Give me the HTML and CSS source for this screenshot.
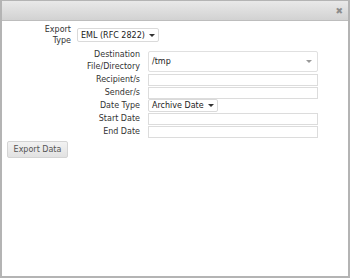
FILE: index.html
```html
<!DOCTYPE html>
<html lang="en">
<head>
    <meta charset="UTF-8">
    <title>Export</title>
    <link rel="stylesheet" href="styles.css">
</head>
<body>
    <div class="dialog">
        <!-- Title bar -->
        <div class="titlebar">
            <span class="close">&#x2716;</span>
        </div>

        <div class="content">
            <!-- Export type -->
            <div class="row type-row">
                <label class="lbl">Export Type</label>
                <div class="select">EML (RFC 2822) <span class="caret"></span></div>
            </div>

            <!-- Details -->
            <div class="fields">
                <label class="lbl">Destination File/Directory</label>
                <div class="combo">/tmp <span class="caret light"></span></div>

                <label class="lbl">Recipient/s</label>
                <div class="input"></div>

                <label class="lbl">Sender/s</label>
                <div class="input"></div>

                <label class="lbl">Date Type</label>
                <div><div class="select short">Archive Date <span class="caret"></span></div></div>

                <label class="lbl">Start Date</label>
                <div class="input"></div>

                <label class="lbl">End Date</label>
                <div class="input"></div>
            </div>

            <button class="btn">Export Data</button>
        </div>
    </div>
</body>
</html>
```

FILE: styles.css
```css
* {
    margin: 0;
    padding: 0;
    box-sizing: border-box;
}

body {
    font-family: 'DejaVu Sans', Verdana, sans-serif;
    font-size: 8px;
    color: #333;
    background: #fff;
    width: 350px;
    height: 278px;
}

.dialog {
    width: 350px;
    height: 278px;
    border: 2px solid #b4b4b4;
    border-top-width: 1px;
    display: flex;
    flex-direction: column;
}

.titlebar {
    height: 20px;
    background: linear-gradient(#e9e9e9, #d2d2d2);
    border-bottom: 1px solid #bdbdbd;
    display: flex;
    justify-content: flex-end;
    align-items: center;
    padding-right: 5px;
}

.close {
    color: #8c8c8c;
    font-size: 9px;
}

.content {
    padding: 3px 5px;
}

.row {
    display: flex;
    align-items: center;
}

.lbl {
    text-align: right;
    line-height: 11px;
}

.type-row {
    margin-left: 34px;
    gap: 6px;
}

.type-row .lbl {
    width: 30px;
}

.select {
    display: inline-flex;
    align-items: center;
    height: 14px;
    padding: 0 3px;
    border: 1px solid #dadada;
    border-radius: 2px;
    color: #222;
    gap: 4px;
}

.select.short {
    height: 13px;
}

.caret {
    width: 0;
    height: 0;
    border-left: 3px solid transparent;
    border-right: 3px solid transparent;
    border-top: 3px solid #333;
}

.caret.light {
    border-top-color: #999;
}

.fields {
    display: grid;
    grid-template-columns: 56px 170px;
    column-gap: 8px;
    margin-left: 77px;
    margin-top: 3px;
    align-items: center;
}

.fields .lbl:first-child {
    line-height: 12px;
}

.combo {
    height: 21px;
    border: 1px solid #e0e0e0;
    border-radius: 2px;
    display: flex;
    align-items: center;
    justify-content: space-between;
    padding: 0 5px 0 3px;
    color: #222;
}

.input {
    height: 12px;
    border: 1px solid #dcdcdc;
    margin-top: 1px;
}

.btn {
    margin-top: 3px;
    width: 61px;
    height: 17px;
    font-family: inherit;
    font-size: 8px;
    color: #555;
    background: linear-gradient(#f2f2f2, #e2e2e2);
    border: 1px solid #d4d4d4;
    border-radius: 2px;
}
```
